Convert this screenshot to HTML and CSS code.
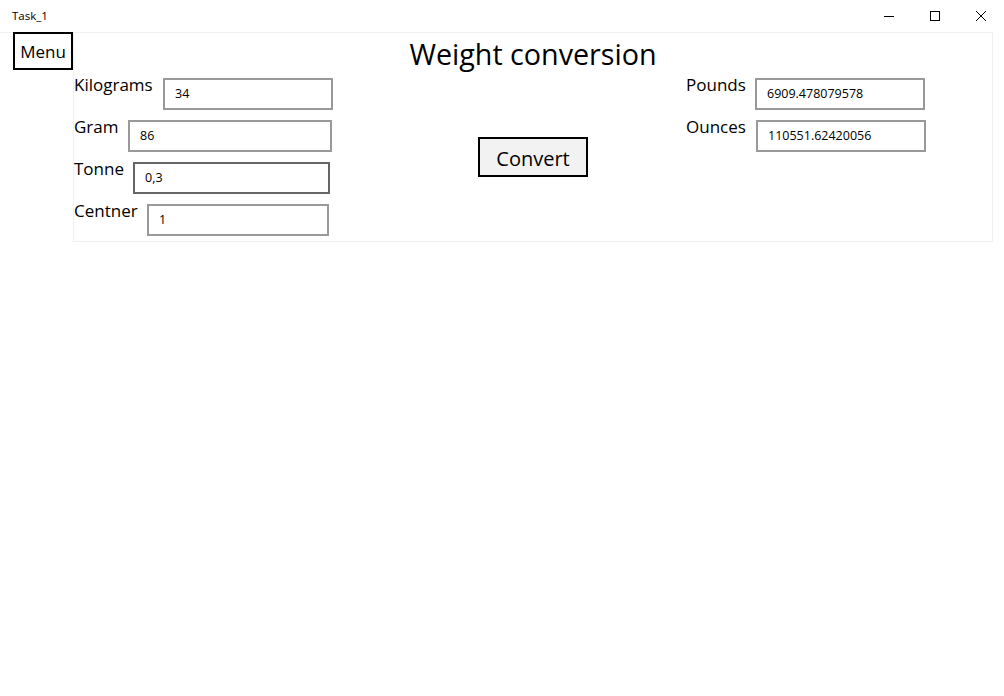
FILE: index.html
```html
<!DOCTYPE html>
<html>
<head>
<meta charset="utf-8">
<title>Task_1</title>
<link rel="stylesheet" href="styles.css">
</head>
<body>
<div class="titlebar">
  <div class="app-title">Task_1</div>
  <div class="caption-buttons">
    <div class="cap-btn"><svg width="10" height="10" viewBox="0 0 10 10"><path d="M0 5.5H10" stroke="#000" stroke-width="1"/></svg></div>
    <div class="cap-btn"><svg width="10" height="10" viewBox="0 0 10 10"><rect x="0.5" y="0.5" width="9" height="9" fill="none" stroke="#000" stroke-width="1"/></svg></div>
    <div class="cap-btn"><svg width="10" height="10" viewBox="0 0 10 10"><path d="M0 0L10 10M10 0L0 10" stroke="#000" stroke-width="1"/></svg></div>
  </div>
</div>
<div class="frame">
  <div class="menu-col">
    <button class="menu-btn">Menu</button>
  </div>
  <div class="panel">
    <h1 class="heading">Weight conversion</h1>
    <div class="col-left">
      <div class="row"><span class="label w-kg">Kilograms</span><div class="box w170">34</div></div>
      <div class="row"><span class="label w-g">Gram</span><div class="box w204">86</div></div>
      <div class="row"><span class="label w-t">Tonne</span><div class="box w197 hover">0,3</div></div>
      <div class="row"><span class="label w-c">Centner</span><div class="box w182">1</div></div>
    </div>
    <div class="col-center">
      <button class="convert-btn">Convert</button>
    </div>
    <div class="col-right">
      <div class="row"><span class="label w-lb">Pounds</span><div class="box w170">6909.478079578</div></div>
      <div class="row"><span class="label w-oz">Ounces</span><div class="box w170">110551.62420056</div></div>
    </div>
  </div>
</div>
</body>
</html>
```

FILE: styles.css
```css
* { box-sizing: border-box; }
html, body { margin: 0; padding: 0; background: #fff; }
body {
  width: 1004px;
  height: 696px;
  font-family: "Open Sans", "Noto Sans", sans-serif;
  color: #000;
  overflow: hidden;
}
.titlebar {
  height: 32px;
  display: flex;
  align-items: center;
  justify-content: space-between;
}
.app-title {
  font-size: 11.5px;
  padding-left: 12px;
  margin-top: -1px;
}
.caption-buttons { display: flex; height: 32px; }
.cap-btn {
  width: 46px;
  height: 32px;
  display: flex;
  align-items: center;
  justify-content: center;
}
.frame {
  width: 993px;
  border-top: 1px solid #f0f0f0;
  display: flex;
  align-items: flex-start;
}
.menu-col { width: 73px; }
.menu-btn {
  margin: -1px 0 0 13px;
  width: 60px;
  height: 38px;
  border: 2px solid #000;
  background: #fff;
  font-family: inherit;
  font-size: 17px;
  padding: 0;
  color: #000;
}
.panel {
  width: 920px;
  height: 209px;
  border: 1px solid #f0f0f0;
  border-top: none;
  display: grid;
  grid-template-columns: 1fr;
  grid-template-rows: 45px 1fr;
}
.heading {
  grid-column: 1;
  grid-row: 1;
  margin: 0;
  font-weight: normal;
  font-size: 28.7px;
  line-height: 41px;
  padding-bottom: 4px;
  text-align: center;
}
.col-left, .col-right {
  grid-column: 1;
  grid-row: 2;
  display: flex;
  flex-direction: column;
  gap: 10px;
}
.col-right { padding-left: 612px; }
.col-center {
  grid-column: 1;
  grid-row: 2;
  display: flex;
  justify-content: center;
  padding-top: 59px;
}
.row { display: flex; align-items: flex-start; height: 32px; }
.label {
  font-size: 17px;
  line-height: 18px;
  margin-top: -2px;
  white-space: nowrap;
}
.w-kg { width: 89px; }
.w-g { width: 54px; }
.w-t { width: 59px; }
.w-c { width: 73px; }
.w-lb { width: 69px; }
.w-oz { width: 70px; }
.box {
  height: 32px;
  border: 2px solid #999;
  font-size: 12.5px;
  line-height: 28px;
  padding-left: 10px;
  white-space: nowrap;
}
.box.hover { border-color: #666; }
.w170 { width: 170px; }
.w204 { width: 204px; }
.w197 { width: 197px; }
.w182 { width: 182px; }
.convert-btn {
  width: 110px;
  height: 40px;
  border: 2px solid #000;
  background: #f2f2f2;
  font-family: inherit;
  font-size: 20px;
  color: #000;
  padding: 3px 0 0 0;
}
```
